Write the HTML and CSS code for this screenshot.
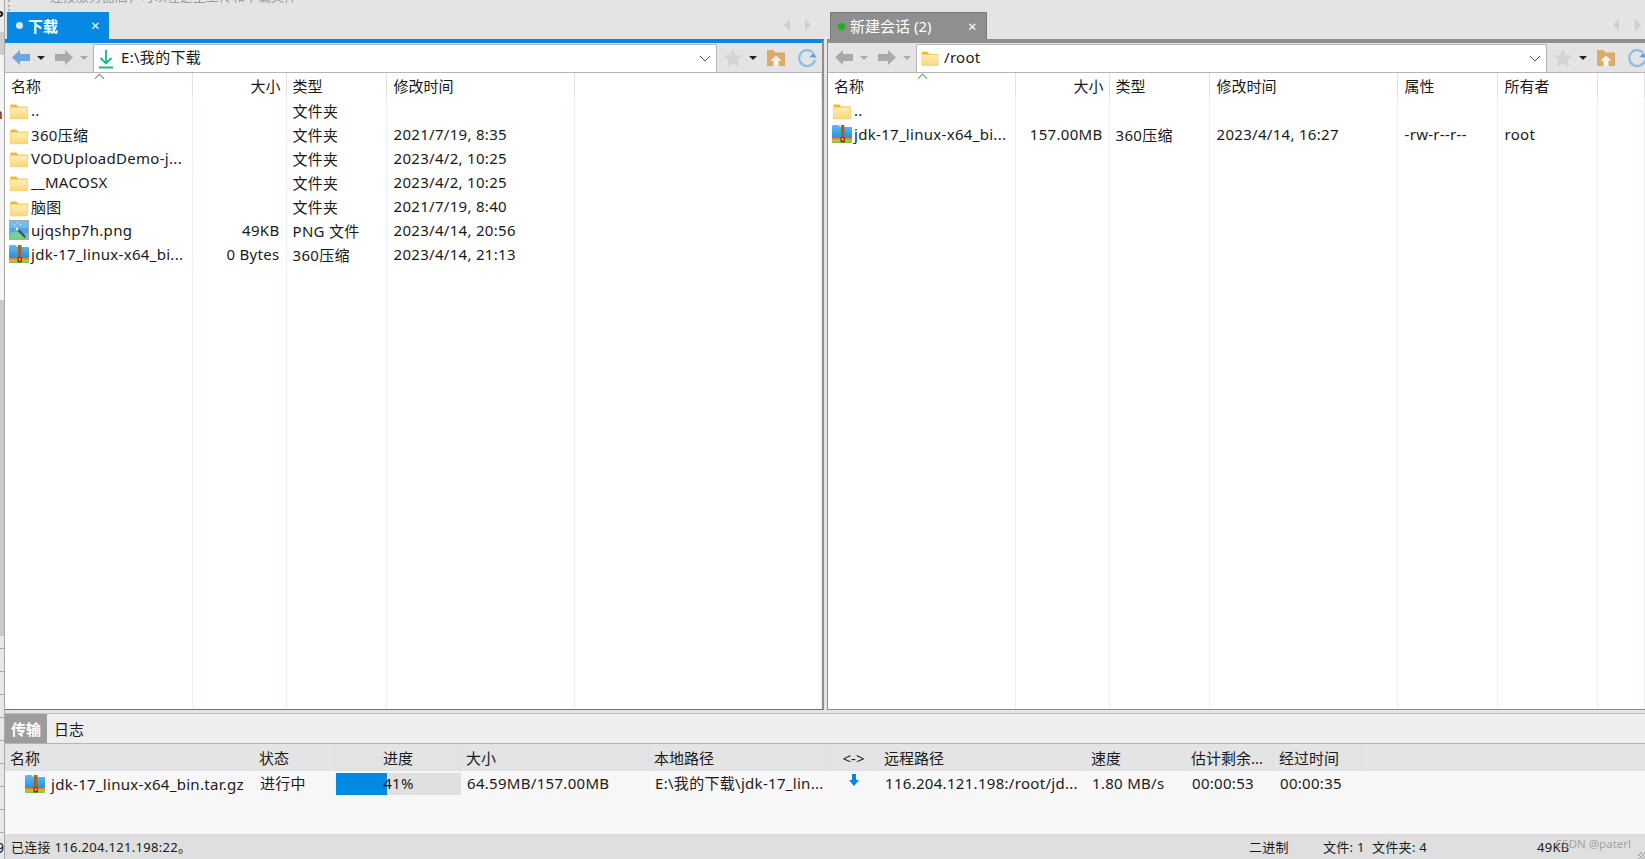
FILE: index.html
```html
<!DOCTYPE html>
<html lang="zh-CN">
  <head>
    <meta charset="UTF-8" />
    <title>FinalShell</title>
    <link rel="stylesheet" href="styles.css">
  </head>
  <body>
    <!-- shared icons -->
    <svg class="defs" width="0" height="0">
      <defs>
        <linearGradient id="folderFill" x1="0" y1="0" x2="0" y2="1">
          <stop offset="0" stop-color="#fff0b8" />
          <stop offset="1" stop-color="#fbd777" />
        </linearGradient>
        <linearGradient id="zipFill" x1="0" y1="0" x2="0" y2="1">
          <stop offset="0" stop-color="#5bbcf5" />
          <stop offset="1" stop-color="#2a8fe0" />
        </linearGradient>
      </defs>
      <symbol id="i-folder" viewBox="0 0 20 18">
        <path d="M1 1.500h6l2.200 2.500H19v3H1z" fill="#f8b52a" />
        <path d="M1 4.500h18v12.200H1z" fill="url(#folderFill)" stroke="#f3bf55" stroke-width=".6" />
      </symbol>
      <symbol id="i-zip" viewBox="0 0 20 20">
        <path d="M0 2.500C0 1.500.8 1 1.500 1h5l2 2H19c.6 0 1 .4 1 1v10H0z" fill="url(#zipFill)" />
        <path d="M0 14h20v2.500H0z" fill="#f08a1d" />
        <path d="M0 16.500h20V18c0 .6-.4 1-1 1H1c-.6 0-1-.4-1-1z" fill="#8dc63f" />
        <path d="M9 1h3.400v18H9z" fill="#a5641f" />
        <path d="M8.400 13h4.600v5H8.400z" fill="#7c4a12" />
        <path d="M9.800 14.400h1.800v2H9.800z" fill="#f3c77d" />
      </symbol>
      <symbol id="i-png" viewBox="0 0 20 20">
        <path d="M0 0h20v20H0z" fill="#a9a9a9" />
        <path d="M1 1h18v18H1z" fill="#4aa5ea" />
        <path d="M1 1h18v7H1z" fill="#6bbdf3" />
        <path d="M1 19v-5c3-3 6-3 9-1s6 1 9 0v6z" fill="#76cf8b" />
        <path d="M9 8l8 8.500-1.500 1.500-8-8.500z" fill="#4a4a4a" />
        <path d="M8 7.500l1.800 1.800-1.500 1.500-1.800-1.800z" fill="#fff" />
        <path d="M5 4h1v1H5zM11 4h1v1h-1zM8 2.500h1v1H8z" fill="#fff" />
      </symbol>
      <symbol id="i-left" viewBox="0 0 18 15">
        <path d="M0 7.500L8 0v4h10v7H8v4z" />
      </symbol>
      <symbol id="i-right" viewBox="0 0 18 15">
        <path d="M18 7.500L10 0v4H0v7h10v4z" />
      </symbol>
      <symbol id="i-star" viewBox="0 0 20 20">
        <path d="M10 1l2.800 5.900 6.200.8-4.500 4.400 1.200 6.400-5.700-3.100-5.700 3.100 1.200-6.400L1 7.700l6.200-.8z" fill="#d4d4d4" />
      </symbol>
      <symbol id="i-up" viewBox="0 0 20 18">
        <path d="M1 1h6.500l2 2.500H19V17H1z" fill="#dfa96c" />
        <path d="M10 6.500l5.500 5.200h-3V17h-5v-5.300h-3z" fill="#fdf4e8" />
      </symbol>
      <symbol id="i-refresh" viewBox="0 0 20 20">
        <path d="M16 4.500A8 8 0 1 0 18 12" fill="none" stroke="#8cbcea" stroke-width="2.200" />
        <path d="M12.500 9.500h7.500l-3.800-4.700z" fill="#5ea4e6" transform="rotate(8 16 8)" />
      </symbol>
    </svg>

    <!-- bits of the window behind this one -->
    <aside class="behind">
      <span class="behind-p">P</span>
      <span class="behind-n">n</span>
      <span class="behind-9">9</span>
    </aside>
    <span class="grip"></span>
    <div class="backdrop-text">连接服务器后，可以在这里上传和下载文件</div>

    <main class="app">
      <section class="panes">
        <div class="pane pane-local">
          <div class="tabbar">
            <div class="tab tab-active">
              <span class="tab-dot"></span>
              <span class="tab-title">下载</span>
              <span class="tab-close">×</span>
            </div>
            <div class="tab-nav">
              <span class="nav-left"></span>
              <span class="nav-right"></span>
            </div>
          </div>
          <div class="pane-body">
            <div class="toolbar">
              <div class="history">
                <svg class="hist-back" width="18" height="15"><use href="#i-left" /></svg>
                <span class="caret caret-dark"></span>
                <svg class="hist-next" width="18" height="15"><use href="#i-right" /></svg>
                <span class="caret"></span>
              </div>
              <div class="path">
                <svg class="path-icon" width="16" height="20" viewBox="0 0 16 20">
                  <path d="M8 1v13M2.500 9L8 14.500 13.500 9" fill="none" stroke="#1fb48c" stroke-width="1.800" />
                  <path d="M1 18.500h14" stroke="#1fb48c" stroke-width="2" />
                </svg>
                <span class="path-text">E:\我的下载</span>
                <svg class="path-arrow" width="12" height="7" viewBox="0 0 12 7"><path d="M1 1l5 5 5-5" fill="none" stroke="#555" /></svg>
              </div>
              <div class="actions">
                <svg width="20" height="20"><use href="#i-star" /></svg>
                <span class="caret caret-dark"></span>
                <svg class="act-up" width="20" height="18"><use href="#i-up" /></svg>
                <svg class="act-refresh" width="20" height="20"><use href="#i-refresh" /></svg>
              </div>
            </div>
            <div class="list">
              <span class="sort-mark"></span>
              <table class="files">
                <colgroup>
                  <col class="c187" /><col class="c94" /><col class="c100" /><col class="c188" /><col />
                </colgroup>
                <tr>
                  <th>名称</th><th class="num">大小</th><th>类型</th><th>修改时间</th><th></th>
                </tr>
                <tr>
                  <td class="name"><svg width="18" height="17"><use href="#i-folder" /></svg>..</td>
                  <td></td><td>文件夹</td><td></td><td></td>
                </tr>
                <tr>
                  <td class="name"><svg width="18" height="17"><use href="#i-folder" /></svg>360压缩</td>
                  <td></td><td>文件夹</td><td>2021/7/19, 8:35</td><td></td>
                </tr>
                <tr>
                  <td class="name"><svg width="18" height="17"><use href="#i-folder" /></svg>VODUploadDemo-j...</td>
                  <td></td><td>文件夹</td><td>2023/4/2, 10:25</td><td></td>
                </tr>
                <tr>
                  <td class="name"><svg width="18" height="17"><use href="#i-folder" /></svg>__MACOSX</td>
                  <td></td><td>文件夹</td><td>2023/4/2, 10:25</td><td></td>
                </tr>
                <tr>
                  <td class="name"><svg width="18" height="17"><use href="#i-folder" /></svg>脑图</td>
                  <td></td><td>文件夹</td><td>2021/7/19, 8:40</td><td></td>
                </tr>
                <tr>
                  <td class="name"><svg width="20" height="20"><use href="#i-png" /></svg>ujqshp7h.png</td>
                  <td class="num">49KB</td><td>PNG 文件</td><td>2023/4/14, 20:56</td><td></td>
                </tr>
                <tr>
                  <td class="name"><svg width="20" height="20"><use href="#i-zip" /></svg>jdk-17_linux-x64_bi...</td>
                  <td class="num">0 Bytes</td><td>360压缩</td><td>2023/4/14, 21:13</td><td></td>
                </tr>
                <tr class="filler"><td></td><td></td><td></td><td></td><td></td></tr>
              </table>
            </div>
          </div>
        </div>

        <div class="pane pane-remote">
          <div class="tabbar">
            <div class="tab tab-idle">
              <span class="tab-dot"></span>
              <span class="tab-title">新建会话 (2)</span>
              <span class="tab-close">×</span>
            </div>
            <div class="tab-nav">
              <span class="nav-left"></span>
              <span class="nav-right"></span>
            </div>
          </div>
          <div class="pane-body">
            <div class="toolbar">
              <div class="history">
                <svg class="hist-next" width="18" height="15"><use href="#i-left" /></svg>
                <span class="caret"></span>
                <svg class="hist-next" width="18" height="15"><use href="#i-right" /></svg>
                <span class="caret"></span>
              </div>
              <div class="path">
                <svg class="path-icon" width="18" height="17"><use href="#i-folder" /></svg>
                <span class="path-text">/root</span>
                <svg class="path-arrow" width="12" height="7" viewBox="0 0 12 7"><path d="M1 1l5 5 5-5" fill="none" stroke="#555" /></svg>
              </div>
              <div class="actions">
                <svg width="20" height="20"><use href="#i-star" /></svg>
                <span class="caret caret-dark"></span>
                <svg class="act-up" width="20" height="18"><use href="#i-up" /></svg>
                <svg class="act-refresh" width="20" height="20"><use href="#i-refresh" /></svg>
              </div>
            </div>
            <div class="list">
              <span class="sort-mark"></span>
              <table class="files">
                <colgroup>
                  <col class="c187" /><col class="c94" /><col class="c100" /><col class="c188" /><col class="c100" /><col class="c100" /><col />
                </colgroup>
                <tr>
                  <th>名称</th><th class="num">大小</th><th>类型</th><th>修改时间</th><th>属性</th><th>所有者</th><th></th>
                </tr>
                <tr>
                  <td class="name"><svg width="18" height="17"><use href="#i-folder" /></svg>..</td>
                  <td></td><td></td><td></td><td></td><td></td><td></td>
                </tr>
                <tr>
                  <td class="name"><svg width="20" height="20"><use href="#i-zip" /></svg>jdk-17_linux-x64_bi...</td>
                  <td class="num">157.00MB</td><td>360压缩</td><td>2023/4/14, 16:27</td><td>-rw-r--r--</td><td>root</td><td></td>
                </tr>
                <tr class="filler"><td></td><td></td><td></td><td></td><td></td><td></td><td></td></tr>
              </table>
            </div>
          </div>
        </div>
      </section>

      <section class="transfer">
        <div class="transfer-tabs">
          <span class="ttab ttab-active">传输</span>
          <span class="ttab">日志</span>
        </div>
        <div class="tgrid thead">
          <div>名称</div>
          <div>状态</div>
          <div class="center">进度</div>
          <div>大小</div>
          <div>本地路径</div>
          <div class="center">&lt;-&gt;</div>
          <div>远程路径</div>
          <div>速度</div>
          <div>估计剩余...</div>
          <div>经过时间</div>
          <div></div>
        </div>
        <div class="tbody">
          <div class="tgrid trow">
            <div class="tname"><svg width="20" height="20"><use href="#i-zip" /></svg>jdk-17_linux-x64_bin.tar.gz</div>
            <div>进行中</div>
            <div class="progress">
              <span class="progress-fill" style="width: 41%"></span>
              <span class="progress-text">41%</span>
            </div>
            <div>64.59MB/157.00MB</div>
            <div>E:\我的下载\jdk-17_lin...</div>
            <div class="center">
              <svg class="dir-arrow" width="10" height="12" viewBox="0 0 10 12"><path d="M3 0h4v6h3l-5 6-5-6h3z" fill="#0a84e0" /></svg>
            </div>
            <div>116.204.121.198:/root/jd...</div>
            <div>1.80 MB/s</div>
            <div>00:00:53</div>
            <div>00:00:35</div>
            <div></div>
          </div>
        </div>
      </section>

      <footer class="statusbar">
        <span class="st-msg">已连接 116.204.121.198:22。</span>
        <span class="st-mode">二进制</span>
        <span class="st-files">文件: 1</span>
        <span class="st-dirs">文件夹: 4</span>
        <span class="st-size">49KB</span>
      </footer>
    </main>

    <span class="watermark">CSDN @paterl</span>
    <span class="resize-grip"></span>
  </body>
</html>
```

FILE: styles.css
```css
* {
  box-sizing: border-box;
}

html,
body {
  height: 100%;
}

body {
  margin: 0;
  position: relative;
  overflow: hidden;
  background: #e4e4e4;
  color: #1a1a1a;
  font-family: "Noto Sans", "Noto Sans CJK SC", sans-serif;
  font-size: 15px;
  letter-spacing: 0.3px;
}

.defs {
  position: absolute;
}

/* the window underneath, 5px of it shows on the left */
.behind {
  position: absolute;
  left: 0;
  top: 0;
  width: 5px;
  height: 100%;
  overflow: hidden;
  border-right: 1px solid #a8a8a8;
  letter-spacing: 0;
  background:
    repeating-linear-gradient(to bottom, transparent 0 22px, #a9a9a9 22px 23px) 0 626px / 100% 208px no-repeat,
    linear-gradient(
      to bottom,
      #ebebeb 0 32px,
      #cdcdcd 32px 55px,
      #f5f5f5 55px 300px,
      #cbcbcb 300px 636px,
      #e8e8e8 636px
    );
}

.behind span {
  position: absolute;
  color: #111;
  font-size: 14px;
  line-height: 16px;
}

.behind-p {
  left: -5px;
  top: 8px;
  font-weight: 700;
}

.behind-n {
  left: -6px;
  top: 106px;
}

.behind-9 {
  left: -4px;
  top: 840px;
}

.grip {
  position: absolute;
  left: 8px;
  top: 0;
  height: 11px;
  border-left: 2px dotted #b0b0b0;
}

/* only the foot of this line shows */
.backdrop-text {
  position: absolute;
  left: 50px;
  top: -10px;
  font-size: 13px;
  line-height: 13px;
  letter-spacing: 0;
  color: #9c9c9c;
  white-space: nowrap;
  filter: blur(0.5px);
}

.app {
  margin-left: 5px;
  height: 859px;
  display: flex;
  flex-direction: column;
}

/* file panes */
.panes {
  height: 710px;
  flex: none;
  display: flex;
}

.pane {
  display: flex;
  flex-direction: column;
}

.pane-local {
  width: 819px;
}

.pane-remote {
  margin-left: 3px;
  flex: 1;
  min-width: 0;
}

.tabbar {
  height: 39px;
  flex: none;
  padding-top: 12px;
  display: flex;
  position: relative;
}

.pane-local .tabbar {
  padding-left: 2px;
}

.pane-remote .tabbar {
  padding-left: 3px;
}

.tab {
  height: 27px;
  display: flex;
  align-items: center;
  color: #fff;
  position: relative;
}

.tab-active {
  width: 102px;
  background: #0789e3;
}

.tab-idle {
  width: 157px;
  background: #8f8f8f;
  border: 1px solid #777;
  border-bottom: 0;
}

.tab-dot {
  width: 7px;
  height: 7px;
  margin-left: 9px;
  border-radius: 50%;
  background: #d5e6f5;
}

.tab-idle .tab-dot {
  margin-left: 7px;
  background: #17b21f;
}

.tab-title {
  margin-left: 5px;
  line-height: 20px;
  letter-spacing: 0;
}

.tab-active .tab-title {
  font-weight: 700;
}

.tab-close {
  position: absolute;
  right: 9px;
  top: 3px;
  line-height: 20px;
}

.tab-nav {
  position: absolute;
  top: 19px;
  right: 13px;
  display: flex;
  gap: 15px;
}

.pane-remote .tab-nav {
  right: 4px;
  gap: 16px;
}

.nav-left,
.nav-right {
  width: 0;
  height: 0;
  border-top: 6px solid transparent;
  border-bottom: 6px solid transparent;
}

.nav-left {
  border-right: 6px solid #cfcfcf;
}

.nav-right {
  border-left: 6px solid #cfcfcf;
}

.pane-body {
  flex: 1;
  min-height: 0;
  display: flex;
  flex-direction: column;
  border-top: 4px solid #0789e3;
  border-right: 2px solid #8f8f8f;
  border-bottom: 1px solid #0f8ad8;
}

.pane-remote .pane-body {
  border-top-color: #8f8f8f;
  border-right: 0;
  border-left: 1px solid #8f8f8f;
  border-bottom-color: #8c8c8c;
}

.toolbar {
  height: 30px;
  flex: none;
  display: flex;
  background: #e4e4e4;
  border-bottom: 1px solid #b5b5b5;
}

.history {
  width: 88px;
  padding-left: 7px;
  display: flex;
  align-items: center;
  flex: none;
}

.history svg {
  flex: none;
}

.hist-back {
  fill: #6ea5da;
}

.hist-next {
  fill: #a9a9a9;
}

.caret {
  width: 0;
  height: 0;
  margin: 1px 6px 0;
  flex: none;
  border-left: 4px solid transparent;
  border-right: 4px solid transparent;
  border-top: 4px solid #a9a9a9;
}

.history .caret {
  margin: 1px 10px 0 7px;
}

.caret-dark {
  border-top-color: #222;
}

.path {
  flex: 1;
  min-width: 0;
  margin-top: 1px;
  display: flex;
  align-items: center;
  background: #fff;
  border: 1px solid #b5b5b5;
  border-width: 1px 1px 0;
  border-radius: 2px 2px 0 0;
}

.path-icon {
  margin-left: 4px;
  flex: none;
}

.pane-local .path-text {
  margin-left: 7px;
}

.pane-remote .path-text {
  margin-left: 5px;
}

.path-text {
  flex: 1;
  line-height: 20px;
  padding-bottom: 3px;
}

.path-arrow {
  margin-right: 5px;
  flex: none;
}

.actions {
  width: 105px;
  padding-left: 6px;
  display: flex;
  align-items: center;
  flex: none;
  overflow: hidden;
}

.pane-remote .actions {
  width: 98px;
}

.actions svg {
  flex: none;
}

.act-up {
  margin-left: 3px;
}

.act-refresh {
  margin-left: 11px;
}

.list {
  flex: 1;
  min-height: 0;
  background: #fff;
  position: relative;
}

.sort-mark {
  position: absolute;
  left: 91px;
  top: 0;
  width: 7px;
  height: 7px;
  border-left: 1px solid #888;
  border-top: 1px solid #888;
  transform: translateY(2px) rotate(45deg);
}

/* tables keep the column lines running down to the bottom */
.files {
  width: 100%;
  height: 100%;
  table-layout: fixed;
  border-collapse: collapse;
}

.c187 {
  width: 187px;
}

.c94 {
  width: 94px;
}

.c100 {
  width: 100px;
}

.c188 {
  width: 188px;
}

.files th,
.files td {
  padding: 0 0 0 6px;
  text-align: left;
  font-weight: 400;
  white-space: nowrap;
  overflow: hidden;
}

.files th:nth-child(n + 4),
.files td:nth-child(n + 4) {
  padding-left: 7px;
}

.files th {
  height: 25px;
  letter-spacing: 0;
  border-right: 1px solid #e3e3e3;
}

.files td {
  height: 24px;
  border-right: 1px solid #e9f0fa;
}

.files .filler td {
  height: auto;
}

.files .name {
  padding-left: 4px;
}

.files .name svg {
  width: 20px;
  margin-right: 2px;
  vertical-align: -4px;
}

.files .num {
  text-align: right;
  padding-right: 6px;
}

.files th.num {
  padding-right: 5px;
}

/* transfer list */
.transfer {
  flex: 1;
  min-height: 0;
  display: flex;
  flex-direction: column;
}

.transfer-tabs {
  height: 31px;
  flex: none;
  margin-top: 3px;
  display: flex;
  background: #eee;
  border-top: 1px solid #bdbdbd;
  border-bottom: 1px solid #b5b5b5;
}

.ttab {
  width: 42px;
  line-height: 30px;
  text-align: center;
  letter-spacing: 0;
}

.ttab-active {
  background: #9c9c9c;
  color: #fff;
  font-weight: 700;
  margin-right: 1px;
}

.tgrid {
  display: grid;
  grid-template-columns: 249px 82px 125px 188px 180px 50px 207px 100px 88px 87px 1fr;
}

.thead {
  height: 27px;
  flex: none;
  background: #e4e4e4;
  border-bottom: 1px solid #dbe2ee;
  line-height: 29px;
  letter-spacing: 0;
}

.thead > div {
  padding-left: 5px;
  border-right: 1px solid #d8e0ec;
}

.thead > div:last-child {
  border-right: 0;
}

.tbody {
  flex: 1;
  min-height: 0;
  background: #f7f7f7;
}

.trow {
  height: 26px;
  line-height: 25px;
}

.trow > div {
  padding-left: 6px;
  white-space: nowrap;
  overflow: hidden;
}

.thead .center,
.trow .center {
  padding-left: 0;
  text-align: center;
}

.trow .tname {
  padding-left: 20px;
  display: flex;
  align-items: center;
  gap: 6px;
}

.trow .progress {
  padding: 0;
  height: 22px;
  margin-top: 2px;
  position: relative;
  background: #e0e0e0;
  text-align: center;
  line-height: 21px;
}

.progress-fill {
  position: absolute;
  left: 0;
  top: 0;
  bottom: 0;
  background: #0289e2;
}

.progress-text {
  position: relative;
}

.dir-arrow {
  margin-top: 3px;
  vertical-align: top;
}

.statusbar {
  height: 25px;
  flex: none;
  display: flex;
  align-items: center;
  padding-left: 6px;
  background: #dfdfdf;
  font-size: 13px;
  white-space: nowrap;
}

.st-msg {
  width: 1238px;
}

.st-mode {
  width: 74px;
}

.st-files {
  width: 49px;
}

.st-dirs {
  width: 165px;
}

.watermark {
  position: absolute;
  right: 14px;
  top: 836px;
  font-size: 11.5px;
  letter-spacing: 0;
  color: rgba(150, 150, 150, 0.85);
}

.resize-grip {
  position: absolute;
  right: 0;
  bottom: 0;
  width: 7px;
  height: 7px;
  background: repeating-conic-gradient(#b0b0b0 0 25%, transparent 0 50%) 0 0 / 4px 4px;
}
```
